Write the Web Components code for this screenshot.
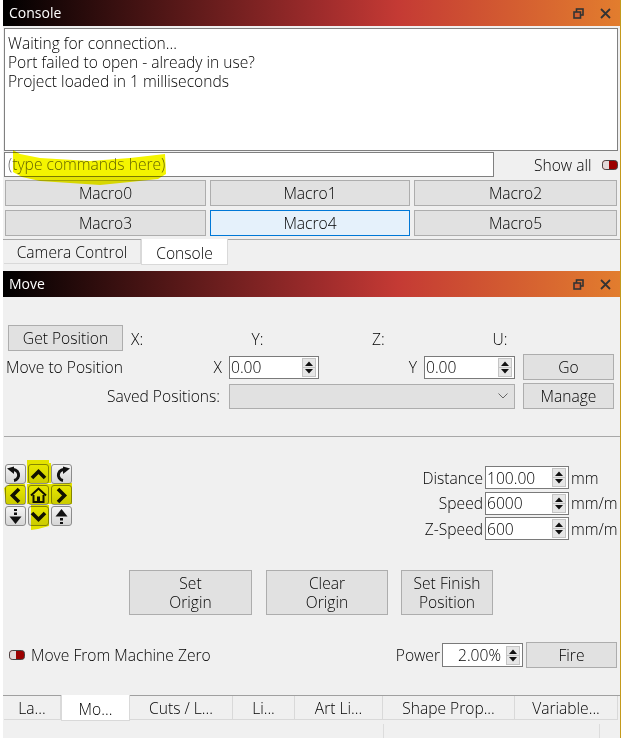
<!DOCTYPE html>
<html>
<head>
<meta charset="utf-8">
<title>Console / Move</title>
<style>
  html, body { margin: 0; background: #fff; }
  body { font: 300 15.6px/20px "Open Sans", "Noto Sans", sans-serif; color: #000; overflow: hidden; height: 738px; }
</style>
</head>
<body>
<app-frame>
  <dock-panel title="Console">
    <console-view></console-view>
  </dock-panel>
  <dock-panel title="Move">
    <move-view></move-view>
  </dock-panel>
</app-frame>

<script>
class AppFrame extends HTMLElement {
  constructor() {
    super();
    this.attachShadow({ mode: 'open' });
    this.shadowRoot.innerHTML = `
      <style>
        :host {
          display: block;
          width: 617px;
          height: 738px;
          margin-left: 3px;
          background: #f0f0f0;
          border-right: 1px solid #c49a1c;
        }
      </style>
      <slot></slot>
    `;
  }
}

class DockPanel extends HTMLElement {
  constructor() {
    super();
    this.attachShadow({ mode: 'open' });
    this.shadowRoot.innerHTML = `
      <style>
        :host { display: block; }
        header {
          height: 26px;
          display: flex;
          align-items: center;
          gap: 16px;
          padding: 0 9px 0 6px;
          color: #fff;
          font-size: 14px;
          font-weight: 400;
          background: linear-gradient(90deg, #000 0%, #a02c2c 52%, #c43a34 64%, #e27d2e 100%);
        }
        span { flex: 1; }
        svg { display: block; }
      </style>
      <header>
        <span></span>
        <svg width="11" height="11" viewBox="0 0 11 11" fill="none" stroke="#333" stroke-width="1.6">
          <rect x="3.5" y="1" width="6.5" height="6"/>
          <rect x="1" y="4" width="6.5" height="6" fill="#d2602f"/>
        </svg>
        <svg width="11" height="11" viewBox="0 0 11 11" fill="none" stroke="#333" stroke-width="1.8">
          <path d="M1 1 10 10M10 1 1 10"/>
        </svg>
      </header>
      <slot></slot>
    `;
    this.shadowRoot.querySelector('span').textContent = this.getAttribute('title');
    this.removeAttribute('title');
  }
}

class UiButton extends HTMLElement {
  constructor() {
    super();
    this.attachShadow({ mode: 'open' });
    this.shadowRoot.innerHTML = `
      <style>
        :host {
          display: flex;
          align-items: center;
          justify-content: center;
          box-sizing: border-box;
          text-align: center;
          background: #e1e1e1;
          border: 1px solid #adadad;
          line-height: 19px;
        }
        :host([hot]) { background: #e5f1fb; border-color: #0078d7; }
      </style>
      <div><slot></slot></div>
    `;
  }
}

class SpinBox extends HTMLElement {
  constructor() {
    super();
    this.attachShadow({ mode: 'open' });
    this.shadowRoot.innerHTML = `
      <style>
        :host {
          display: flex;
          align-items: center;
          box-sizing: border-box;
          height: 23px;
          padding: 0 2px 0 1px;
          background: #fff;
          border: 1px solid #7a7a7a;
        }
        div { flex: 1; }
        :host([end]) div { text-align: right; padding-right: 5px; }
        svg { display: block; flex: none; }
      </style>
      <div><slot></slot></div>
      <svg width="14" height="19" viewBox="0 0 14 19">
        <rect x=".5" y=".5" width="13" height="18" fill="#e6e6e6" stroke="#c4c4c4"/>
        <path d="M7 3.5 11 8H3zM7 15.5 3 11H11z" fill="#111"/>
        <path d="M1 9.5H13" stroke="#c4c4c4"/>
      </svg>
    `;
  }
}

class ToggleSwitch extends HTMLElement {
  constructor() {
    super();
    this.attachShadow({ mode: 'open' });
    this.shadowRoot.innerHTML = `
      <style>
        :host { display: block; width: 16px; height: 10px; }
        svg { display: block; }
      </style>
      <svg width="16" height="10" viewBox="0 0 16 10">
        <rect x=".5" y=".5" width="15" height="9" rx="3" fill="#9c0000" stroke="#444"/>
        <path d="M3.5 1H7V9H3.5A2.5 2.5 0 0 1 1 6.500V3.500A2.500 2.500 0 0 1 3.500 1Z" fill="#e2d9d9"/>
      </svg>
    `;
  }
}

class TabStrip extends HTMLElement {
  constructor() {
    super();
    this.attachShadow({ mode: 'open' });
    this.shadowRoot.innerHTML = `
      <style>
        :host {
          display: flex;
          align-items: flex-start;
          box-sizing: border-box;
          height: 27px;
          border-top: 1px solid #a9a9a9;
          padding-left: 1px;
        }
      </style>
      <slot></slot>
    `;
  }
}

class TabItem extends HTMLElement {
  constructor() {
    super();
    this.attachShadow({ mode: 'open' });
    this.shadowRoot.innerHTML = `
      <style>
        :host {
          display: flex;
          align-items: center;
          justify-content: center;
          box-sizing: border-box;
          height: 24px;
          white-space: nowrap;
          border: 1px solid #d9d9d9;
          border-width: 0 1px 1px 0;
        }
        :host([active]) {
          height: 26px;
          margin-top: -1px;
          padding-top: 2px;
          background: #fff;
          border-width: 0 1px 1px 1px;
        }
      </style>
      <slot></slot>
    `;
  }
}

class ConsoleView extends HTMLElement {
  constructor() {
    super();
    this.attachShadow({ mode: 'open' });
    this.shadowRoot.innerHTML = `
      <style>
        :host { display: block; position: relative; padding-top: 2px; }
        .log {
          box-sizing: border-box;
          height: 123px;
          margin: 0 2px 0 1px;
          padding: 5px 3px;
          background: #fff;
          border: 1px solid #808080;
          line-height: 19px;
        }
        .cmd {
          display: flex;
          align-items: center;
          height: 25px;
          margin: 1px 0 3px 1px;
        }
        .field {
          box-sizing: border-box;
          width: 490px;
          height: 25px;
          padding: 1px 3px;
          background: #fff;
          border: 1px solid #808080;
          color: #6a6a6a;
        }
        .show { margin-left: 40px; margin-right: 8px; width: 60px; white-space: nowrap; }
        .macros {
          display: grid;
          grid-template-columns: 201px 200px 203px;
          grid-auto-rows: 26px;
          gap: 4px;
          margin: 0 0 3px 2px;
        }
        .hl {
          position: absolute;
          left: -3px;
          top: 0;
          mix-blend-mode: multiply;
          pointer-events: none;
        }
      </style>
      <div class="log">
        <div>Waiting for connection...</div>
        <div>Port failed to open - already in use?</div>
        <div>Project loaded in 1 milliseconds</div>
      </div>
      <div class="cmd">
        <div class="field">(type commands here)</div>
        <div class="show">Show all</div>
        <toggle-switch></toggle-switch>
      </div>
      <div class="macros">
        <ui-button>Macro0</ui-button>
        <ui-button>Macro1</ui-button>
        <ui-button>Macro2</ui-button>
        <ui-button>Macro3</ui-button>
        <ui-button hot>Macro4</ui-button>
        <ui-button>Macro5</ui-button>
      </div>
      <tab-strip>
        <tab-item style="width:137px">Camera Control</tab-item>
        <tab-item active style="width:87px">Console</tab-item>
      </tab-strip>
      <div style="height:5px"></div>
      <svg class="hl" width="180" height="170" viewBox="0 0 180 170">
        <path d="M13 124 20 128 40 132 90 135 130 132 165 128 166 148 158 153 130 156 100 159 70 157 40 155 22 151 13 146Z" fill="#f4f400"/>
      </svg>
    `;
  }
}

class JogPad extends HTMLElement {
  constructor() {
    super();
    this.attachShadow({ mode: 'open' });
    const ic = {
      ccw: '<path d="M6 6A5.500 5.500 0 1 1 9 16.500" fill="none" stroke-width="3"/><path d="M2 4.500 9 2.500V10Z" stroke="none" fill="#111"/>',
      up: '<path d="M4 14 10.500 7.500 17 14" fill="none" stroke-width="3.600"/>',
      cw: '<path d="M15 6A5.500 5.500 0 1 0 12 16.500" fill="none" stroke-width="3"/><path d="M19 4.500 12 2.500V10Z" stroke="none" fill="#111"/>',
      left: '<path d="M14 4 7.500 10.500 14 17" fill="none" stroke-width="3.600"/>',
      home: '<path d="M3 10.500 10.500 3.500 18 10.500" fill="none" stroke-width="2"/><path d="M5.500 10V17H15.500V10" fill="none" stroke-width="2"/><rect x="9" y="11.500" width="3" height="5.500" fill="#111" stroke="none"/>',
      right: '<path d="M7 4 13.500 10.500 7 17" fill="none" stroke-width="3.600"/>',
      zdown: '<path d="M10.500 3V5M10.500 6.500V9" fill="none" stroke-width="3"/><path d="M4.500 10.500H16.500L10.500 18Z" stroke="none" fill="#111"/>',
      down: '<path d="M4 7 10.500 13.500 17 7" fill="none" stroke-width="3.600"/>',
      zup: '<path d="M10.500 18V16M10.500 14.500V12" fill="none" stroke-width="3"/><path d="M4.500 10.500H16.500L10.500 3Z" stroke="none" fill="#111"/>'
    };
    const cells = Object.keys(ic).map(k =>
      `<button-cell><svg width="21" height="21" viewBox="0 0 21 21" stroke="#111">${ic[k]}</svg></button-cell>`
    ).join('');
    this.shadowRoot.innerHTML = `
      <style>
        :host {
          display: grid;
          position: relative;
          grid-template-columns: repeat(3, 21px);
          grid-auto-rows: 20px;
          gap: 1px 2px;
          width: 67px;
        }
        button-cell {
          display: block;
          box-sizing: border-box;
          border: 1px solid #8c8c8c;
          border-radius: 3px;
          background: linear-gradient(#f4f4f4, #d6d6d6);
          overflow: hidden;
        }
        svg { display: block; margin: -1px; }
        .hl {
          position: absolute;
          left: -3px;
          top: -4px;
          margin: 0;
          mix-blend-mode: multiply;
          pointer-events: none;
        }
      </style>
      ${cells}
      <svg class="hl" width="76" height="72" viewBox="0 0 76 72">
        <path d="M25 0H47V3H49V23H25ZM25 24 49 24V44H25ZM29 45H47V66L36 69 29 70ZM2 28 8 24H23V44H4ZM49 24 70 23V44H49Z" fill="#f2f200"/>
      </svg>
    `;
  }
}

class MoveView extends HTMLElement {
  constructor() {
    super();
    this.attachShadow({ mode: 'open' });
    this.shadowRoot.innerHTML = `
      <style>
        :host { display: block; }
        .axes {
          display: flex;
          align-items: center;
          height: 26px;
          margin: 28px 0 3px 5px;
        }
        .axes ui-button { width: 115px; height: 26px; margin-right: 8px; }
        .axes span { width: 120.500px; padding-top: 1px; }
        .pos {
          display: grid;
          grid-template-columns: 226px 90px 105px 91px 91px;
          grid-template-rows: 26px 26px;
          row-gap: 3px;
          align-items: center;
        }
        .pos .lab { display: flex; justify-content: space-between; padding: 0 7px 0 3px; }
        .pos .yl { text-align: right; padding-right: 7px; }
        .pos .saved { text-align: right; padding-right: 9px; }
        .pos ui-button { height: 26px; margin-left: 8px; width: 91px; }
        .combo {
          grid-column: 2 / 5;
          display: flex;
          align-items: center;
          justify-content: flex-end;
          box-sizing: border-box;
          height: 25px;
          padding-right: 6px;
          background: #e1e1e1;
          border: 1px solid #adadad;
        }
        hr {
          height: 1px;
          border: 0;
          margin: 27px 0 27px 1px;
          background: #a8a8a8;
        }
        .jog {
          display: flex;
          justify-content: space-between;
          height: 62px;
          padding: 0 2px 0 2px;
        }
        .rates {
          display: grid;
          grid-template-columns: auto 84px 47px;
          grid-auto-rows: 23px;
          row-gap: 2.500px;
          align-items: center;
          margin-top: 2px;
          column-gap: 2px;
        }
        .rates span:nth-child(3n+1) { text-align: right; }
        .rates span { white-space: nowrap; }
        .rates spin-box { height: 23px; }
        .acts {
          display: flex;
          gap: 14px;
          margin: 44px 0 27px 126px;
        }
        .acts ui-button { width: 123px; height: 45px; }
        .acts ui-button:nth-child(2) { width: 122px; }
        .acts ui-button:last-child { width: 92px; margin-left: -1px; }
        .fire {
          display: flex;
          align-items: center;
          height: 26px;
          padding-left: 6px;
        }
        .fire span.m { margin-left: 6px; }
        .fire span.p { margin-left: auto; margin-right: 2px; }
        .fire spin-box { width: 81px; height: 24px; margin-right: 3px; }
        .fire ui-button { width: 91px; height: 26px; margin-right: 3px; }
        tab-strip { margin-top: 27px; border-top-color: #a0a0a0; height: 25px; padding-left: 1px; }
        .foot { display: flex; height: 19px; }
        .foot i { display: block; height: 100%; width: 1px; background: #dcdcdc; margin-left: 380px; margin-top: 4px; }
        .foot i + i { margin-left: 215px; }
      </style>
      <div class="axes">
        <ui-button>Get Position</ui-button>
        <span>X:</span><span>Y:</span><span>Z:</span><span>U:</span>
      </div>
      <div class="pos">
        <div class="lab"><span>Move to Position</span><span>X</span></div>
        <spin-box>0.00</spin-box>
        <div class="yl">Y</div>
        <spin-box>0.00</spin-box>
        <ui-button>Go</ui-button>
        <div class="saved">Saved Positions:</div>
        <div class="combo">
          <svg width="10" height="6" viewBox="0 0 10 6" fill="none" stroke="#666"><path d="M.5.500 5 5 9.500.500"/></svg>
        </div>
        <ui-button>Manage</ui-button>
      </div>
      <hr>
      <div class="jog">
        <jog-pad></jog-pad>
        <div class="rates">
          <span>Distance</span><spin-box>100.00</spin-box><span>mm</span>
          <span>Speed</span><spin-box>6000</spin-box><span>mm/m</span>
          <span>Z-Speed</span><spin-box>600</spin-box><span>mm/m</span>
        </div>
      </div>
      <div class="acts">
        <ui-button>Set<br>Origin</ui-button>
        <ui-button>Clear<br>Origin</ui-button>
        <ui-button>Set Finish<br>Position</ui-button>
      </div>
      <div class="fire">
        <toggle-switch></toggle-switch>
        <span class="m">Move From Machine Zero</span>
        <span class="p">Power</span>
        <spin-box end>2.00%</spin-box>
        <ui-button>Fire</ui-button>
      </div>
      <tab-strip>
        <tab-item style="width:57px">La...</tab-item>
        <tab-item active style="width:69px">Mo...</tab-item>
        <tab-item style="width:103px">Cuts / L...</tab-item>
        <tab-item style="width:62px">Li...</tab-item>
        <tab-item style="width:88px">Art Li...</tab-item>
        <tab-item style="width:132px">Shape Prop...</tab-item>
        <tab-item style="width:103px">Variable...</tab-item>
      </tab-strip>
      <div class="foot"><i></i><i></i></div>
    `;
  }
}

customElements.define('app-frame', AppFrame);
customElements.define('dock-panel', DockPanel);
customElements.define('ui-button', UiButton);
customElements.define('spin-box', SpinBox);
customElements.define('toggle-switch', ToggleSwitch);
customElements.define('tab-strip', TabStrip);
customElements.define('tab-item', TabItem);
customElements.define('console-view', ConsoleView);
customElements.define('jog-pad', JogPad);
customElements.define('move-view', MoveView);
</script>
</body>
</html>
